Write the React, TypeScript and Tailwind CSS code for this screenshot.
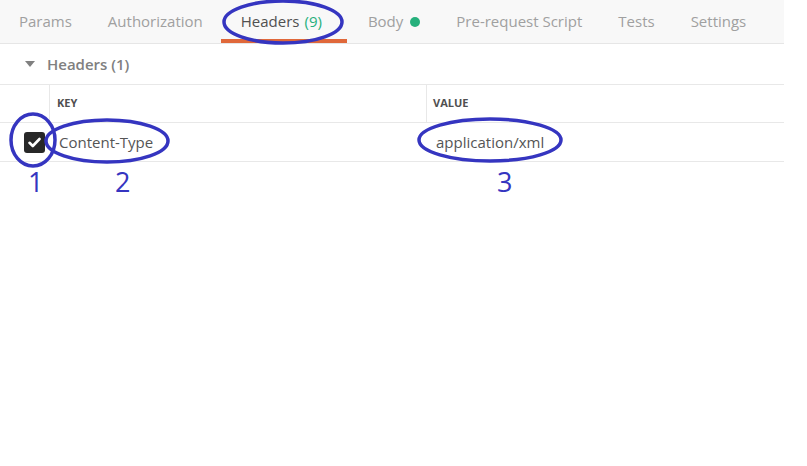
import React from "react";

const tabs = [
  { label: "Params" },
  { label: "Authorization" },
  { label: "Headers", count: "(9)", active: true },
  { label: "Body", dot: true },
  { label: "Pre-request Script" },
  { label: "Tests" },
  { label: "Settings" },
];

export default function App() {
  return (
    <div className="relative w-[807px] h-[466px] bg-white overflow-hidden" style={{ fontFamily: '"Open Sans", sans-serif' }}>
      <div className="w-[784px]">
        {/* tab bar */}
        <div className="flex h-[44px] bg-[#f8f8f8] border-b border-[#e6e6e6] pl-[1px]">
          {tabs.map((t) => (
            <div
              key={t.label}
              className={
                "flex items-center text-[15px] h-full " +
                (t.active
                  ? "text-[#505050] border-b-[4px] border-[#e0683a] pt-[4px] pl-[20px] pr-[25px] mr-[3px]"
                  : "text-[#a0a0a0] px-[18px]")
              }
            >
              <span>{t.label}</span>
              {t.count && <span className="ml-[5px] text-[#26b07c]">{t.count}</span>}
              {t.dot && <span className="ml-[7px] w-[10px] h-[10px] rounded-full bg-[#26b07c]" />}
            </div>
          ))}
        </div>
        {/* section header */}
        <div className="flex items-center h-[41px] border-b border-[#e8e8e8] pl-[25px]">
          <svg width="10" height="8" viewBox="0 0 10 8" className="mr-[12px]">
            <path d="M0 1 L10 1 L5 7 Z" fill="#808080" />
          </svg>
          <span className="text-[15px] font-semibold text-[#808080]">Headers (1)</span>
        </div>
        {/* table header */}
        <div className="flex h-[38px] border-b border-[#e8e8e8] text-[11px] font-bold text-[#505050]">
          <div className="w-[50px] border-r border-[#e8e8e8]" />
          <div className="w-[377px] border-r border-[#e8e8e8] flex items-center pl-[7px]">KEY</div>
          <div className="flex-1 flex items-center pl-[6px]">VALUE</div>
        </div>
        {/* row */}
        <div className="flex h-[39px] border-b border-[#e8e8e8] text-[15px] text-[#555555]">
          <div className="w-[50px] flex items-center pl-[24px]">
            <div className="w-[21px] h-[21px] rounded-[3px] bg-[#282828] flex items-center justify-center">
              <svg width="13" height="11" viewBox="0 0 13 11">
                <path d="M1.5 5.8 L4.8 9 L11.5 2" fill="none" stroke="#fff" strokeWidth="2.6" strokeLinecap="round" strokeLinejoin="round" />
              </svg>
            </div>
          </div>
          <div className="w-[377px] flex items-center pl-[9px]">Content-Type</div>
          <div className="flex-1 flex items-center pl-[9px]">application/xml</div>
        </div>
      </div>

      {/* annotation overlay */}
      <svg className="absolute left-0 top-0 pointer-events-none" width="807" height="466">
        <g fill="none" stroke="#3535c0" strokeWidth="3.5">
          <ellipse cx="283" cy="22" rx="59" ry="21" />
          <ellipse cx="33" cy="140" rx="22" ry="26" />
          <ellipse cx="107" cy="141" rx="61" ry="21" />
          <ellipse cx="490" cy="140" rx="71" ry="21" />
        </g>
      </svg>
      <div className="absolute left-[28px] top-[168px] text-[27px] text-[#3535c0] leading-none">1</div>
      <div className="absolute left-[115px] top-[168px] text-[27px] text-[#3535c0] leading-none">2</div>
      <div className="absolute left-[497px] top-[168px] text-[27px] text-[#3535c0] leading-none">3</div>
    </div>
  );
}
